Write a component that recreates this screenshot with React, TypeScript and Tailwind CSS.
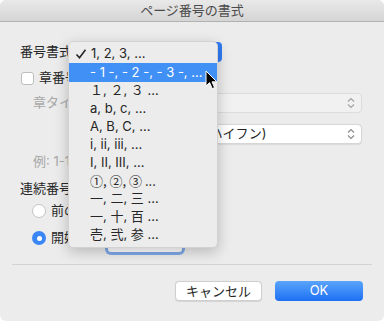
const menuItems = [
  { label: "１, ２, ３ ...", cjk: false },
  { label: "a, b, c, ...", cjk: false },
  { label: "A, B, C, ...", cjk: false },
  { label: "i, ii, iii, ...", cjk: false },
  { label: "I, II, III, ...", cjk: false },
  { label: "①, ②, ③ ...", cjk: true },
  { label: "一, 二, 三 ...", cjk: false },
  { label: "一, 十, 百 ...", cjk: false },
  { label: "壱, 弐, 参 ...", cjk: false },
];

function Chevrons({ color = "#9a9a9a" }: { color?: string }) {
  return (
    <svg width="8" height="12" viewBox="0 0 8 12" fill="none">
      <path d="M1 4.5 L4 1.5 L7 4.5" stroke={color} strokeWidth="1.2" />
      <path d="M1 7.5 L4 10.5 L7 7.5" stroke={color} strokeWidth="1.2" />
    </svg>
  );
}

function Radio({ checked }: { checked?: boolean }) {
  if (checked) {
    return (
      <span className="flex h-[14px] w-[14px] shrink-0 items-center justify-center rounded-full bg-[#3a86f4]">
        <span className="h-[5px] w-[5px] rounded-full bg-white" />
      </span>
    );
  }
  return <span className="h-[14px] w-[14px] shrink-0 rounded-full border border-[#c4c4c4] bg-white" />;
}

function Cursor() {
  return (
    <svg width="14" height="21" viewBox="0 0 14 21" className="absolute left-[205px] top-[70px]">
      <path
        d="M1 1 L1 16 L4.6 12.6 L7.2 18.6 L9.6 17.6 L7 11.8 L11.8 11.8 Z"
        fill="#000"
        stroke="#fff"
        strokeWidth="1"
        strokeLinejoin="round"
      />
    </svg>
  );
}

function PopupMenu() {
  return (
    <div className="absolute left-[68px] top-[41px] w-[150px] rounded-[5px] border border-[#d2d2d2] bg-[#ececec] py-[3px] shadow-[0_4px_14px_rgba(0,0,0,0.22)]">
      <div className="flex h-[18px] items-center text-[13px] text-[#262626]">
        <svg width="12" height="12" viewBox="0 0 12 12" className="ml-[6px] mr-[3px]">
          <path d="M1.5 6.5 L4.5 9.8 L10.5 1.8" fill="none" stroke="#262626" strokeWidth="1.6" />
        </svg>
        <span className="ml-[1px]">1, 2, 3, ...</span>
      </div>
      <div className="flex h-[19px] items-center bg-[#4190f5] pl-[21px] text-[13px] text-white">
        - 1 -, - 2 -, - 3 -, ...
      </div>
      {menuItems.map((item) =>
        item.cjk ? (
          <div
            key={item.label}
            className="flex h-[18px] items-center pl-[21px] font-['Noto_Sans_CJK_JP',sans-serif] text-[13px] text-[#262626]"
          >
            {item.label}
          </div>
        ) : (
          <div key={item.label} className="flex h-[18px] items-center pl-[21px] text-[13px] text-[#262626]">
            {item.label}
          </div>
        ),
      )}
    </div>
  );
}

export default function App() {
  return (
    <div className="relative h-[321px] w-[384px] bg-white font-['Inter','Noto_Sans_CJK_JP',sans-serif]">
      <div className="flex h-full flex-col overflow-hidden rounded-[6px] bg-[#ececec]">
        <div className="h-[22px] shrink-0 border-b border-[#b1b1b1] bg-gradient-to-b from-[#e9e9e9] to-[#d5d5d5] text-center text-[13px] leading-[21px] text-[#4a4a4a]">
          ページ番号の書式
        </div>

        <div className="flex flex-col whitespace-nowrap pl-[20px] pr-[22px] text-[13px] text-[#262626]">
          <div className="mt-[20px] flex h-[20px] items-center">
            <span className="w-[48px] shrink-0">番号書式</span>
            <div className="flex h-[20px] w-[154px] overflow-hidden rounded-[4px] bg-white">
              <div className="flex-1" />
              <div className="w-[18px] bg-[#2f7cf5]" />
            </div>
          </div>

          <div className="mt-[7px] flex h-[18px] items-center gap-[5px]">
            <span className="ml-[1px] h-[13px] w-[13px] shrink-0 rounded-[3px] border border-[#bdbdbd] bg-white" />
            <span className="w-[30px] overflow-hidden">章番号を含める</span>
          </div>

          <div className="mt-[6px] flex h-[20px] items-center">
            <span className="ml-[13px] w-[35px] shrink-0 overflow-hidden text-[#a8a8a8]">章タイトル:</span>
            <div className="ml-[47px] flex h-[20px] flex-1 items-center justify-end rounded-[4px] border border-[#dcdcdc] bg-[#f1f1f1] pr-[6px]">
              <Chevrons color="#a4a4a4" />
            </div>
          </div>

          <div className="mt-[11px] flex h-[20px] items-center">
            <div className="ml-[95px] flex h-[20px] flex-1 items-center justify-between rounded-[4px] border border-[#d6d6d6] bg-white pl-[89px] pr-[6px] shadow-[0_0.5px_1px_rgba(0,0,0,0.08)]">
              <span>(ハイフン)</span>
              <Chevrons color="#8c8c8c" />
            </div>
          </div>

          <div className="mt-[9px] flex h-[18px] items-center pl-[13px]">
            <span className="w-[35px] overflow-hidden text-[#a8a8a8]">例: 1-1, 1-A</span>
          </div>

          <div className="mt-[9px] flex h-[18px] items-center">
            <span className="w-[48px] overflow-hidden">連続番号の設定</span>
          </div>

          <div className="mt-[4px] flex h-[18px] items-center gap-[5px] pl-[12px]">
            <Radio />
            <span className="w-[17px] overflow-hidden">前のセクションから継続</span>
          </div>

          <div className="mt-[7px] flex h-[22px] items-center pl-[12px]">
            <Radio checked />
            <span className="ml-[5px] w-[17px] shrink-0 overflow-hidden">開始番号:</span>
            <div className="ml-[40px] mt-[6px] h-[22px] w-[74px] shrink-0 rounded-[3px] bg-white ring-[3px] ring-[#7fa9e8]" />
            <span className="ml-[8px] mt-[6px] h-[12px] w-[10px] shrink-0 rounded-full bg-[#d6d6d6]" />
          </div>
        </div>

        <div className="mx-[12px] mt-[15px] h-px shrink-0 bg-[#d3d3d3]" />

        <div className="mt-[16px] flex justify-end gap-[13px] pr-[21px]">
          <button className="h-[20px] w-[87px] rounded-[4px] border border-[#cfcfcf] bg-white text-[13px] text-[#262626] shadow-[0_0.5px_1px_rgba(0,0,0,0.1)]">
            キャンセル
          </button>
          <button className="h-[20px] w-[88px] rounded-[4px] bg-gradient-to-b from-[#5aa4fb] to-[#1c6ff3] text-[13px] text-white">
            OK
          </button>
        </div>
      </div>

      <PopupMenu />
      <Cursor />
    </div>
  );
}
